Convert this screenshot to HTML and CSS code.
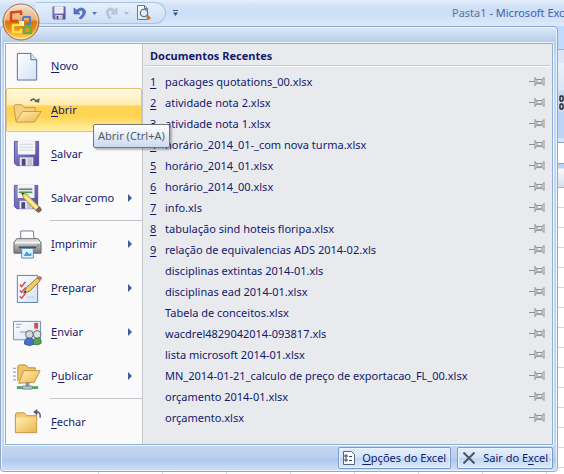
FILE: index.html
```html
<!DOCTYPE html>
<html lang="pt-BR">
<head>
<meta charset="utf-8">
<title>Pasta1 - Microsoft Excel</title>
<link rel="stylesheet" href="styles.css">
</head>
<body>
<svg class="defs" aria-hidden="true">
  <defs>
    <linearGradient id="orb" x1="0" y1="0" x2="0" y2="1"><stop offset="0" stop-color="#f3e3d3"/><stop offset=".42" stop-color="#e9b27a"/><stop offset=".5" stop-color="#d9720f"/><stop offset=".75" stop-color="#f09a1e"/><stop offset="1" stop-color="#ffe27a"/></linearGradient>
    <linearGradient id="folder" x1="0" y1="0" x2="1" y2="1"><stop offset="0" stop-color="#fff0b4"/><stop offset="1" stop-color="#edb54c"/></linearGradient>
    <linearGradient id="paper" x1="0" y1="0" x2="1" y2="1"><stop offset="0" stop-color="#ffffff"/><stop offset="1" stop-color="#d3e1f6"/></linearGradient>
    <linearGradient id="disk" x1="0" y1="0" x2="1" y2="1"><stop offset="0" stop-color="#8f8fce"/><stop offset="1" stop-color="#51459a"/></linearGradient>
    <linearGradient id="metal" x1="0" y1="0" x2="0" y2="1"><stop offset="0" stop-color="#e6e6e8"/><stop offset="1" stop-color="#77777d"/></linearGradient>
  </defs>
  <symbol id="pin" viewBox="0 0 16 11"><path d="M0 5.500H6M6 1v9M6 2.500L8 3.500H13L15 1.500V9.500L13 7.500H8L6 8.500M8 3.500V7.500M13 3.500V7.500" fill="none" stroke="#8d8f94"/><path d="M8 6h5v1.500H8z" fill="#a5a7ab"/></symbol>
  <symbol id="floppy" viewBox="0 0 28 28"><path d="M1.500 1.500H26.500V26.500H4L1.500 24Z" fill="url(#disk)" stroke="#5a519f"/><path d="M5 1h18v14H5z" fill="#f6f6fa"/><path d="M7 4.500h14M7 7.500h14M7 10.500h14" stroke="#d2d2dc"/><path d="M7 18h14v8.500H7z" fill="#e9e9f1"/><path d="M9 19.500h4v7H9z" fill="#4c4683"/><path d="M15 19h5v7h-5z" fill="#c5c5d0"/></symbol>
  <symbol id="pencil" viewBox="0 0 24 24"><path d="M1 1L3 7L18 22L22 18L7 3Z" fill="#f3d66d" stroke="#8b7334" stroke-width=".8"/><path d="M1 1L2 4L4 2Z" fill="#333"/><path d="M5 5L19.500 19.500" stroke="#fff4bd" stroke-width="1.500"/><path d="M17 21L21 17L23.500 20.500L20.500 23.500Z" fill="#86645a" stroke="#594546" stroke-width=".8"/></symbol>
</svg>

<header class="titlebar">
  <div class="quick">
    <button class="tool" aria-label="Salvar arquivo"><svg width="14" height="14"><use href="#floppy"/></svg></button>
    <button class="tool" aria-label="Desfazer"><svg width="14" height="14" viewBox="0 0 14 14"><path d="M1 2v6h6L5 6Q8 3 9.500 5Q11 8 6 12L8 13Q14 8 12 4Q9 0 3.500 4Z" fill="#5576cb" stroke="#3a58ac" stroke-width=".6"/></svg></button>
    <button class="caret" aria-label="Lista de desfazer"><svg width="5" height="3" viewBox="0 0 5 3"><path d="M0 0h5L2.500 3z" fill="#5279b8"/></svg></button>
    <button class="tool" aria-label="Refazer"><svg width="14" height="14" viewBox="0 0 14 14"><path d="M12 2v6H6L8 6Q5 3 3.500 5Q2 8 6 12L4 12.500Q0 7 2 4Q5 0 9.500 4Z" fill="#c0cbdc" stroke="#a1b0c6" stroke-width=".6"/></svg></button>
    <button class="caret" aria-label="Lista de refazer"><svg width="5" height="3" viewBox="0 0 5 3"><path d="M0 0h5L2.500 3z" fill="#a9bad2"/></svg></button>
    <button class="tool" aria-label="Visualizar impressão"><svg width="16" height="16" viewBox="0 0 16 16"><path d="M1.500 .5h7l3 3v11h-10z" fill="url(#paper)" stroke="#68768e"/><path d="M8.500 .5v3h3" fill="none" stroke="#68768e"/><circle cx="8" cy="8" r="3.700" fill="#dceeff" stroke="#6c7685" stroke-width="1.300"/><path d="M11 11l3 3" stroke="#c47b3a" stroke-width="3"/></svg></button>
  </div>
  <button class="caret more" aria-label="Personalizar barra"><svg width="7" height="6" viewBox="0 0 7 6"><path d="M1 .5h5" stroke="#34568c"/><path d="M1 2.500h5L3.500 6z" fill="#34568c"/></svg></button>
  <div class="title"><span class="book">Pasta1</span> - Microsoft Excel</div>
</header>

<main class="workspace">
  <div class="tabs"></div>
  <div class="ribbon"><svg width="6" height="18" viewBox="0 0 6 18" aria-hidden="true"><rect x="2" y="2" width="3" height="5" rx="1" fill="none" stroke="#1c222d" stroke-width="1.400"/><rect x="2" y="10" width="3" height="5" rx="1" fill="none" stroke="#1c222d" stroke-width="1.400"/></svg></div>
  <div class="strip"></div>
  <div class="formula"></div>
  <div class="columns"></div>
  <div class="cells"></div>
</main>

<section class="menu" aria-label="Menu do Office">
  <div class="panel">
    <nav class="commands">
      <button class="command"><svg class="icon" viewBox="0 0 30 30"><path d="M4.500 1.500h14l6 6.500v21h-20z" fill="url(#paper)" stroke="#5c6f95"/><path d="M18.500 1.500V8h6" fill="#dbe6f7" stroke="#5c6f95"/></svg><span><u>N</u>ovo</span></button>
      <button class="command active"><svg class="icon" viewBox="0 0 30 30"><path d="M3 25.500L1 11q0-2 2-2h6l3 3h11v5" fill="#f6cf83" stroke="#c8964a"/><path d="M3 26L10 16h19l-6 10q-.5 1-2 1H4q-1 0-1-1z" fill="url(#folder)" stroke="#c8964a"/><path d="M18 5q4-4 7 1" fill="none" stroke="#576168" stroke-width="1.600"/><path d="M22 6l5 1 .5-5z" fill="#576168"/></svg><span><u>A</u>brir</span></button>
      <button class="command"><svg class="icon" viewBox="0 0 30 30"><use href="#floppy" width="28" height="28"/></svg><span><u>S</u>alvar</span></button>
      <button class="command"><svg class="icon" viewBox="0 0 30 30"><use href="#floppy" width="27" height="27"/><path d="M6 5.500h14M6 8.500h14" stroke="#4b9b4d" stroke-width="1.500"/><use href="#pencil" x="8" y="8" width="22" height="22"/></svg><span>Salvar <u>c</u>omo</span><i class="arrow"></i></button>
      <hr>
      <button class="command"><svg class="icon" viewBox="0 0 30 30"><path d="M8 11V1h13l1 10" fill="#fbfdff" stroke="#727b8a"/><path d="M4 9h22l3 4v11H1V13z" fill="url(#metal)" stroke="#66676b"/><path d="M2 13h26" stroke="#f4f4f4" stroke-width="2"/><path d="M6 17h18v2H6z" fill="#4b4c51"/><path d="M9 19h12v10H9z" fill="#e6f5ff" stroke="#438bc9"/><path d="M11 27l3-5 3 3 2-2v4z" fill="#4d9bd7"/><path d="M25 16h2" stroke="#57aa58" stroke-width="2"/></svg><span><u>I</u>mprimir</span><i class="arrow"></i></button>
      <button class="command"><svg class="icon" viewBox="0 0 30 30"><path d="M4.500 1.500h21v28h-21z" fill="url(#paper)" stroke="#617ea9"/><path d="M7 11l2 2 4-5M7 17l2 2 4-5M7 23l2 2 4-5" fill="none" stroke="#c95155" stroke-width="1.500"/><path d="M14 12h8M14 24h8" stroke="#b7c9e0"/><path d="M11 20l3-6L25 4l3 3-11 11z" fill="#f3cd62" stroke="#92763b"/><path d="M25 4l2-2q3 0 3 3l-2 2z" fill="#bd756b"/><path d="M11 20l1.500-3 1.500 1.500z" fill="#30363d"/></svg><span><u>P</u>reparar</span><i class="arrow"></i></button>
      <button class="command"><svg class="icon" viewBox="0 0 30 30"><path d="M.5 3.500h28v19H.5z" fill="url(#paper)" stroke="#718db6"/><path d="M3 6.500h6M3 9.500h4M7 14.500h11" stroke="#829abc"/><path d="M22 5h4v6h-4z" fill="#cf5147"/><circle cx="17" cy="17" r="4" fill="#d5d8d8" stroke="#60646c"/><circle cx="25" cy="17" r="4" fill="#dadfdf" stroke="#60646c"/><path d="M12 27q-1-6 5-6 6 0 5 6-5 3-10 0z" fill="#4b70cc" stroke="#3855a4"/><path d="M21 27q-1-6 4-6 5 0 4 5-3 3-8 1z" fill="#52a74f" stroke="#397d3a"/></svg><span><u>E</u>nviar</span><i class="arrow"></i></button>
      <button class="command"><svg class="icon" viewBox="0 0 30 30"><path d="M5 20V5q0-2 2-2h6l3 3h7v4" fill="#f2c667" stroke="#b98c36"/><path d="M6 22L11 9h17l-6 12z" fill="url(#folder)" stroke="#c0903c"/><path d="M0 6.500h3M0 10.500h3M0 14.500h3M0 18.500h3" stroke="#7c8ba0"/><path d="M13 21h4v4h-4z" fill="#80989c"/><path d="M4 26.500h22" stroke="#4fa955" stroke-width="3"/><path d="M10 25h10v3H10z" fill="#b7cbd3" stroke="#7a8b92"/></svg><span>P<u>u</u>blicar</span><i class="arrow"></i></button>
      <hr>
      <button class="command"><svg class="icon" viewBox="0 0 30 30"><path d="M2.500 25.500V7q0-2 2-2h7l3 3h10v17.500z" fill="#f3cc71" stroke="#bc9041"/><path d="M3 10h21v15H3z" fill="url(#folder)"/><path d="M28 10q1-6-4-6" fill="none" stroke="#585e70" stroke-width="1.600"/><path d="M25 1l-4 3 4 4z" fill="#585e70"/></svg><span><u>F</u>echar</span></button>
    </nav>
    <section class="recent">
      <h2>Documentos Recentes</h2>
      <ol>
        <li><a href="#"><u>1</u><span>packages quotations_00.xlsx</span></a><button aria-label="Fixar"><svg><use href="#pin"/></svg></button></li>
        <li><a href="#"><u>2</u><span>atividade nota 2.xlsx</span></a><button aria-label="Fixar"><svg><use href="#pin"/></svg></button></li>
        <li><a href="#"><u>3</u><span>atividade nota 1.xlsx</span></a><button aria-label="Fixar"><svg><use href="#pin"/></svg></button></li>
        <li><a href="#"><u>4</u><span>horário_2014_01-_com nova turma.xlsx</span></a><button aria-label="Fixar"><svg><use href="#pin"/></svg></button></li>
        <li><a href="#"><u>5</u><span>horário_2014_01.xlsx</span></a><button aria-label="Fixar"><svg><use href="#pin"/></svg></button></li>
        <li><a href="#"><u>6</u><span>horário_2014_00.xlsx</span></a><button aria-label="Fixar"><svg><use href="#pin"/></svg></button></li>
        <li><a href="#"><u>7</u><span>info.xls</span></a><button aria-label="Fixar"><svg><use href="#pin"/></svg></button></li>
        <li><a href="#"><u>8</u><span>tabulação sind hoteis floripa.xlsx</span></a><button aria-label="Fixar"><svg><use href="#pin"/></svg></button></li>
        <li><a href="#"><u>9</u><span>relação de equivalencias ADS 2014-02.xls</span></a><button aria-label="Fixar"><svg><use href="#pin"/></svg></button></li>
        <li><a href="#"><u></u><span>disciplinas extintas 2014-01.xls</span></a><button aria-label="Fixar"><svg><use href="#pin"/></svg></button></li>
        <li><a href="#"><u></u><span>disciplinas ead 2014-01.xlsx</span></a><button aria-label="Fixar"><svg><use href="#pin"/></svg></button></li>
        <li><a href="#"><u></u><span>Tabela de conceitos.xlsx</span></a><button aria-label="Fixar"><svg><use href="#pin"/></svg></button></li>
        <li><a href="#"><u></u><span>wacdrel4829042014-093817.xls</span></a><button aria-label="Fixar"><svg><use href="#pin"/></svg></button></li>
        <li><a href="#"><u></u><span>lista microsoft 2014-01.xlsx</span></a><button aria-label="Fixar"><svg><use href="#pin"/></svg></button></li>
        <li><a href="#"><u></u><span>MN_2014-01-21_calculo de preço de exportacao_FL_00.xlsx</span></a><button aria-label="Fixar"><svg><use href="#pin"/></svg></button></li>
        <li><a href="#"><u></u><span>orçamento 2014-01.xlsx</span></a><button aria-label="Fixar"><svg><use href="#pin"/></svg></button></li>
        <li><a href="#"><u></u><span>orçamento.xlsx</span></a><button aria-label="Fixar"><svg><use href="#pin"/></svg></button></li>
      </ol>
    </section>
  </div>
  <footer class="actions">
    <button><svg width="12" height="14" viewBox="0 0 12 14"><path d="M.5 .5h8l3 3v10H.5z" fill="#f8fbff" stroke="#55667e"/><path d="M2 4h2v2H2zM2 8h2v2H2z" fill="none" stroke="#34445b"/><path d="M6 5.500h3M6 9.500h3" stroke="#34445b"/></svg><span><u>O</u>pções do Excel</span></button>
    <button><svg width="14" height="12" viewBox="0 0 14 12"><path d="M1.500 .5L12.500 11.500M12.500 .5L1.500 11.500" stroke="#4b535f" stroke-width="2"/></svg><span>Sair do E<u>x</u>cel</span></button>
  </footer>
</section>
<div class="tooltip" role="tooltip">Abrir (Ctrl+A)</div>
<button class="orb" aria-label="Botão do Office"><svg width="38" height="38" viewBox="0 0 38 38"><circle cx="19" cy="19" r="18" fill="url(#orb)" stroke="#997253"/><circle cx="19" cy="19" r="16.500" fill="none" stroke="#fff0cb" opacity=".6"/><g fill="none" stroke-width="2.500" stroke-linejoin="round"><path d="M16 18H9V9.500l10-1V12" stroke="#d94a15"/><path d="M21 14h7v7h-4M21 14v4" stroke="#4b80c4" stroke-width="2"/><path d="M17 22h-6v7h8v-3" stroke="#ffe046"/><path d="M22 24h7v6h-7z" stroke="#6eac3b"/></g><rect x="17" y="18" width="5" height="5" fill="#fff1ad"/></svg></button>
</body>
</html>
```
FILE: styles.css
```css
* { box-sizing: border-box; }
body {
  margin: 0;
  min-height: 100vh;
  display: flex;
  flex-direction: column;
  overflow: hidden;
  position: relative;
  background: #fff;
  color: #121a6c;
  font: 11px/16px "Noto Sans", "Open Sans", sans-serif;
}
button {
  padding: 0;
  border: 0;
  background: none;
  color: inherit;
  font: inherit;
}
svg { display: block; flex: none; }
u { text-underline-offset: 2px; }
.defs { position: absolute; width: 0; height: 0; }

.titlebar {
  height: 26px;
  display: flex;
  align-items: center;
  padding-left: 36px;
  background: linear-gradient(#e4eefb, #d3e3f7 20%, #cbdef6 50%, #dceafb);
}
.quick {
  height: 22px;
  display: flex;
  align-items: center;
  padding: 0 12px 0 14px;
  border: 1px solid #a9c3e6;
  border-left: 0;
  border-radius: 0 12px 12px 0;
  background: linear-gradient(#e6effb, #cddff5);
}
.tool { display: flex; justify-content: center; width: 18px; margin-right: 3px; }
.caret { width: 5px; margin-right: 6px; }
.tool:last-child { margin: 0; }
.more { width: 7px; margin-left: 6px; }
.title { margin-left: auto; width: 112px; white-space: nowrap; color: #4661a8; }
.book { color: #69718c; }

.workspace { flex: 1; display: flex; flex-direction: column; }
.tabs { height: 24px; background: #bfdbff; border-bottom: 1px solid #8db2e3; }
.ribbon {
  height: 62px;
  display: flex;
  align-items: flex-end;
  justify-content: flex-end;
  background: linear-gradient(#dbe7f5 20%, #e8f1fc 21%, #d9e6f6 65%, #c9daef 66%);
}
.strip { height: 30px; background: #bcd5f7; border-bottom: 4px solid #d5e4f7; }
.formula { height: 22px; background: #fff; border: solid #8ba7cc; border-width: 1px 0; }
.columns { height: 24px; background: linear-gradient(#b9d1f2 4px, #f7f9fc 5px, #d6dfeb); border-bottom: 1px solid #9eb6ce; }
.cells {
  flex: 1;
  background:
    repeating-linear-gradient(#fff0 0 19px, #d0d7e5 19px 20px),
    repeating-linear-gradient(90deg, #fff0 0 63px, #d0d7e5 63px 64px) 35px 0;
}

.menu {
  position: absolute;
  top: 26px;
  left: 0;
  right: 6px;
  padding: 0 4px;
  border: 1px solid #8ea9cd;
  border-radius: 4px;
  background: linear-gradient(#dce8f7, #c8daf0 8px, #b6cae7 16px, #c4d7f0 30px, #c4d7f0 419px, #b9cfee 431px, #aec8ec 432px, #cfe1f7);
  box-shadow: inset 0 0 0 1px #eaf3fd;
}
.panel {
  display: flex;
  margin-top: 16px;
  border: 1px solid #8fafd6;
  outline: 1px solid #f2f7fd;
  background: #e9eaee;
}
.commands {
  width: 137px;
  display: flex;
  flex-direction: column;
  border-right: 1px solid #c5c8cf;
  background: #fafafa;
}
.command {
  height: 44px;
  display: flex;
  align-items: center;
  gap: 9px;
  padding: 0 9px 0 6px;
  border: 1px solid transparent;
  border-radius: 2px;
  text-align: left;
}
.command.active {
  border-color: #dfc478;
  background: linear-gradient(#fff9e2, #ffedb0 37%, #ffd457 41%, #ffd452 65%, #fff0a6);
}
.icon { width: 29px; height: 29px; }
.arrow {
  margin-left: auto;
  border: solid transparent;
  border-width: 4px 0 4px 4px;
  border-left-color: #405c96;
}
hr { width: 92px; height: 2px; margin: 0 0 0 auto; border: 0; border-top: 1px solid #c1c3c8; }

.recent { flex: 1; padding: 0 2px; }
h2 {
  margin: 0 0 5px;
  padding: 3px 5px 1px;
  border-bottom: 1px solid #c9cacd;
  box-shadow: 0 1px #fafafa;
  font-size: 11px;
  line-height: 17px;
}
ol { margin: 0; padding: 0 5px; list-style: none; }
li { height: 21px; display: flex; align-items: center; justify-content: space-between; }
li a { display: flex; color: inherit; text-decoration: none; white-space: nowrap; }
li u { width: 15px; }
li svg { width: 16px; height: 11px; }

.actions { height: 26px; display: flex; align-items: center; justify-content: flex-end; gap: 6px; }
.actions button {
  height: 22px;
  display: flex;
  align-items: center;
  gap: 7px;
  padding: 0 4px;
  border: 1px solid #7b9cc8;
  border-radius: 2px;
  background: linear-gradient(#e4effd, #d3e3f8 50%, #bed6f4 51%, #dcebfc);
  box-shadow: inset 0 0 0 1px #e9f3ff;
}
.tooltip {
  position: absolute;
  left: 93px;
  top: 124px;
  padding: 3px 4px;
  border: 1px solid #767676;
  border-radius: 2px;
  background: linear-gradient(#fff, #cbdaf0);
  box-shadow: 2px 2px 2px #0004;
  color: #555a68;
}
.orb { position: absolute; left: 2px; top: 3px; }
```
